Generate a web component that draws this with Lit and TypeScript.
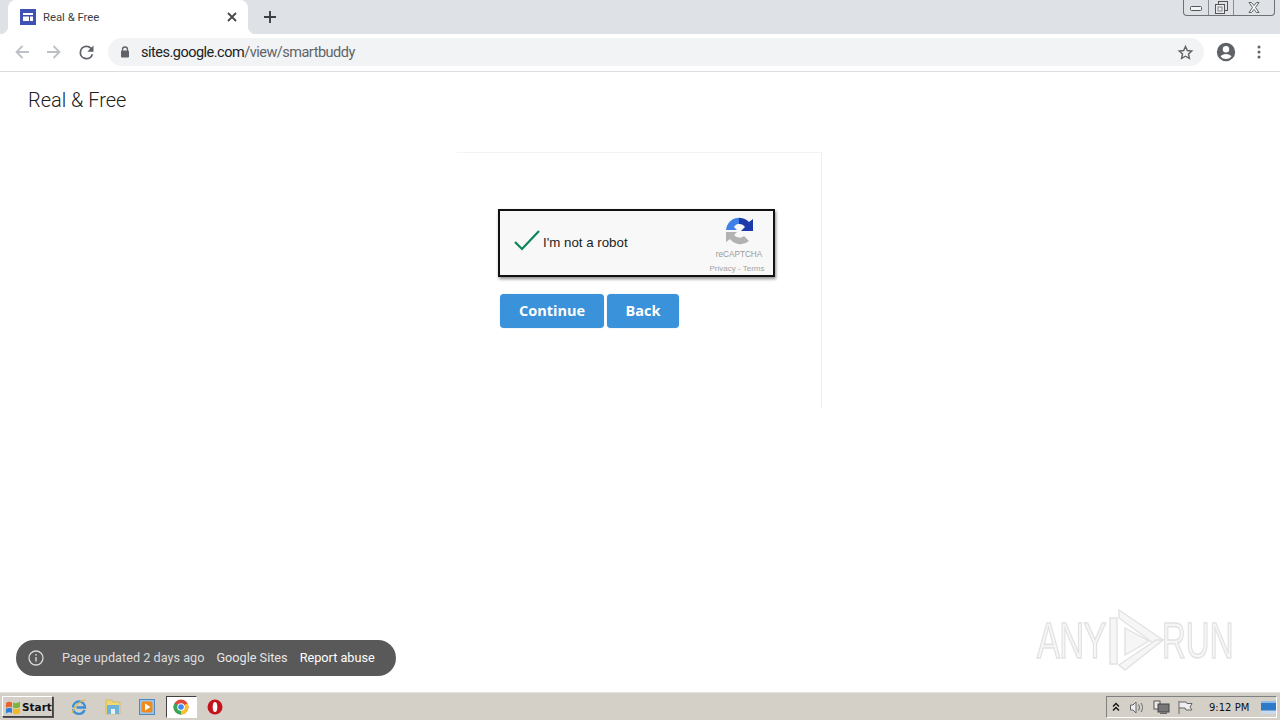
import { LitElement, html, css } from "lit";
import { customElement } from "lit/decorators.js";

@customElement("app-root")
export class AppRoot extends LitElement {
  static styles = css`
    :host { display: flex; flex-direction: column; width: 1280px; height: 720px; overflow: hidden; background: #fff; font-family: Roboto, "Liberation Sans", sans-serif; position: relative; }
    .tabstrip { height: 34px; background: #dee1e6; display: flex; align-items: flex-end; flex: none; position: relative; }
    .tab { width: 240px; height: 34px; margin-left: 8px; background: #fff; border-radius: 8px 8px 0 0; display: flex; align-items: center; padding: 0 8px 0 12px; box-sizing: border-box; gap: 7px; position: relative; }
    .tab::before, .tab::after { content: ""; position: absolute; bottom: 0; width: 8px; height: 8px; background: radial-gradient(circle at var(--c) 0, #dee1e6 8px, #fff 8.5px); }
    .tab::before { left: -8px; --c: 0; }
    .tab::after { right: -8px; --c: 100%; }
    .tab .title { font-size: 11.3px; color: #3c4043; flex: 1; white-space: nowrap; }
    .newtab { margin-left: 15px; height: 34px; display: flex; align-items: center; }
    .winbtns { position: absolute; right: 5px; top: 0; width: 92px; height: 16px; border: 1px solid #6d7074; border-top: none; border-radius: 0 0 4px 4px; display: grid; grid-template-columns: 25px 25px 1fr; box-sizing: border-box; }
    .winbtns div { display: flex; align-items: center; justify-content: center; border-right: 1px solid #8a8d91; }
    .winbtns div:last-child { border-right: none; }
    .toolbar { height: 38px; flex: none; background: #fff; border-bottom: 1px solid #dadce0; box-sizing: border-box; display: flex; align-items: center; padding-bottom: 1px; }
    .nav { width: 32px; height: 32px; display: flex; align-items: center; justify-content: center; flex: none; }
    .navs { display: flex; margin-left: 6px; margin-right: 6px; }
    .omni { width: 1096px; height: 28px; border-radius: 14px; background: #f1f3f4; display: flex; align-items: center; padding: 0 9px 0 11px; box-sizing: border-box; flex: none; }
    .url { margin-left: 10px; font-size: 14.5px; color: #202124; flex: 1; white-space: nowrap; letter-spacing: -0.5px; }
    .url span { color: #5f6368; }
    .tools { display: flex; align-items: center; margin-left: 11px; }
    .avatar { width: 22px; height: 22px; display: flex; margin-right: 20px; }
    .page { flex: 1; position: relative; min-height: 0; }
    .sitetitle { font-size: 20px; font-weight: 300; color: #212121; padding: 17px 0 0 28px; line-height: 23px; letter-spacing: -0.02px; }
    .card { width: 365px; height: 256px; box-sizing: border-box; margin: 40px 0 0 457px; border-top: 1px solid #f3f3f3; border-right: 1px solid #eeeeee; padding: 56px 0 0 41px; }
    .captcha { width: 277px; height: 68px; box-sizing: border-box; border: 2px solid #111; background: #f8f8f8; box-shadow: 1px 2px 3px rgba(0,0,0,.45); display: flex; position: relative; align-items: center; padding: 0 0 4px 13px; }
    .captcha .label { font-family: "Liberation Sans", sans-serif; font-size: 13.3px; color: #1c1c1c; margin: 0 0 -2px 2px; }
    .rc { position: absolute; right: 0; top: 0; bottom: 0; width: 80px; display: flex; flex-direction: column; align-items: center; }
    .rc svg { margin-top: 6px; margin-left: 12px; }
    .rc .brand { font-family: "Liberation Sans", sans-serif; font-size: 8.2px; color: #9a9a9a; margin: 4px 0 0 12px; line-height: 10px; }
    .rc .legal { font-family: "Liberation Sans", sans-serif; font-size: 8px; color: #a4a4a4; margin: 4px 0 0 8px; line-height: 10px; white-space: nowrap; }
    .buttons { display: flex; gap: 3px; margin: 17px 0 0 2px; }
    .btn { height: 34px; background: #3a92db; color: #fff; border-radius: 4px; font-family: "Open Sans", sans-serif; font-weight: 700; font-size: 14.5px; display: flex; align-items: center; justify-content: center; padding-bottom: 1px; box-sizing: border-box; box-shadow: 0 0 1px rgba(58,146,219,.6); }
    .btn.c { width: 104px; }
    .btn.b { width: 72px; }
    .pill { position: absolute; left: 16px; top: 568px; width: 380px; height: 36px; border-radius: 18px; background: #595959; display: flex; align-items: center; padding: 0 0 1px 12px; box-sizing: border-box; color: #e3e3e3; font-size: 12.7px; white-space: nowrap; }
    .pill svg { margin-top: 1px; }
    .pill .t1 { margin-left: 18px; color: #dcdcdc; }
    .pill .t2 { margin-left: 12px; color: #e6e6e6; }
    .pill .t3 { margin-left: 12px; color: #fff; }
    .mark { position: absolute; left: 1037px; top: 536px; height: 64px; width: 200px; font-family: "Liberation Sans", sans-serif; font-size: 50px; line-height: 64px; color: #f6f6f6; -webkit-text-stroke: 1.6px #e2e2e2; filter: blur(.5px); }
    .mark .w { position: absolute; left: 0; top: 1px; transform: scaleX(.69); transform-origin: left center; letter-spacing: -1px; }
    .mark .r { position: absolute; left: 125px; top: 1px; transform: scaleX(.66); transform-origin: left center; }
    .mark svg { position: absolute; left: 70px; top: 0; }
    .taskbar { height: 28px; flex: none; background: #d4d0c8; border-top: 1px solid #e6e3dd; box-sizing: border-box; display: flex; align-items: center; position: relative; }
    .start { width: 51px; height: 21px; margin-left: 2px; box-sizing: border-box; border: 1px solid; border-color: #fff #404040 #404040 #fff; box-shadow: 1px 1px 0 #555; display: flex; align-items: center; padding-left: 2px; gap: 1px; font-family: "DejaVu Sans", sans-serif; font-weight: 700; font-size: 10.5px; color: #111; }
    .ql { display: flex; align-items: center; margin-left: 9px; }
    .ql .i { width: 34px; display: flex; justify-content: center; align-items: center; }
    .ql .act { width: 31px; height: 22px; background: #fff; border: 1px solid; border-color: #404040 #fff #fff #404040; box-sizing: border-box; display: flex; align-items: center; justify-content: center; }
    .tray { position: absolute; right: 3px; top: 3px; width: 171px; height: 22px; border: 1px solid; border-color: #808080 #fff #fff #808080; box-sizing: border-box; display: flex; align-items: center; font-size: 11.5px; color: #111; }
    .tray .first { display: flex; width: 18px; justify-content: center; }
    .tray .clock { margin-left: 12px; width: 40px; white-space: nowrap; font-family: "DejaVu Sans", sans-serif; font-size: 10px; }
    .tray .ti { display: flex; width: 24px; justify-content: center; }
    .tray .desk { margin-left: 12px; flex: none; }
  `;

  render() {
    return html`
      <div class="tabstrip">
        <div class="tab">
          <svg width="16" height="16" viewBox="0 0 16 16"><rect width="16" height="16" fill="#3f51b5"/><rect x="3" y="4" width="10" height="2" fill="#fff"/><rect x="3" y="7.5" width="6" height="4.500" fill="#fff"/><rect x="10" y="7.5" width="3" height="4.500" fill="#fff"/></svg>
          <span class="title">Real &amp; Free</span>
          <svg width="16" height="16" viewBox="0 0 16 16"><path d="M4 4l8 8M12 4l-8 8" stroke="#45484c" stroke-width="1.800" fill="none"/></svg>
        </div>
        <div class="newtab"><svg width="14" height="14" viewBox="0 0 14 14"><path d="M7 1v12M1 7h12" stroke="#3c4043" stroke-width="1.900" fill="none"/></svg></div>
        <div class="winbtns">
          <div><svg width="12" height="8" viewBox="0 0 12 8"><rect x=".5" y="2.500" width="11" height="4" rx="1" fill="#f4f5f7" stroke="#555"/></svg></div>
          <div><svg width="13" height="13" viewBox="0 0 13 13"><rect x="3.500" y=".5" width="9" height="9" fill="none" stroke="#555"/><rect x=".5" y="3.500" width="9" height="9" fill="#e8eaee" stroke="#555"/><rect x="3" y="6" width="4" height="4" fill="none" stroke="#888"/></svg></div>
          <div><svg width="12" height="11" viewBox="0 0 12 11"><path d="M1 .5h2.500L6 3.500 8.500.5H11L7.500 5.500 11 10.500H8.500L6 7.500 3.500 10.500H1L4.500 5.500z" fill="#f4f5f7" stroke="#555" stroke-width=".9"/></svg></div>
        </div>
      </div>
      <div class="toolbar">
        <div class="navs">
          <div class="nav"><svg width="16" height="16" viewBox="0 0 16 16"><path d="M15 8H2.500M8.500 2L2.500 8l6 6" stroke="#bdc1c6" stroke-width="1.800" fill="none"/></svg></div>
          <div class="nav"><svg width="16" height="16" viewBox="0 0 16 16"><path d="M1 8h12.500M7.500 2l6 6-6 6" stroke="#bdc1c6" stroke-width="1.800" fill="none"/></svg></div>
          <div class="nav"><svg width="21" height="21" viewBox="0 0 24 24"><path d="M17.650 6.350A7.960 7.960 0 0 0 12 4a8 8 0 1 0 7.730 10h-2.080A6 6 0 1 1 12 6c1.660 0 3.140.69 4.220 1.780L13 11h7V4z" fill="#5f6368"/></svg></div>
        </div>
        <div class="omni">
          <svg width="12" height="14" viewBox="0 0 12 14"><path d="M3.500 6V4.500a2.500 2.500 0 0 1 5 0V6" fill="none" stroke="#5f6368" stroke-width="1.300"/><rect x="2" y="5.500" width="8" height="7" rx="1" fill="#5f6368"/></svg>
          <span class="url">sites.google.com<span>/view/smartbuddy</span></span>
          <svg width="17" height="17" viewBox="0 0 24 24" style="margin-right:1px"><path d="M12 3.500l2.600 5.700 6.200.7-4.600 4.200 1.300 6.100L12 17.200l-5.500 3 1.300-6.100-4.600-4.200 6.200-.7z" fill="none" stroke="#5f6368" stroke-width="2"/></svg>
        </div>
        <div class="tools">
          <div class="avatar"><svg width="22" height="22" viewBox="0 0 24 24"><path d="M12 2a10 10 0 1 0 0 20 10 10 0 0 0 0-20zm0 3.500a3.500 3.500 0 1 1 0 7 3.500 3.500 0 0 1 0-7zm0 14.200a7.700 7.700 0 0 1-6-2.900c.8-1.700 3.800-2.700 6-2.700s5.200 1 6 2.700a7.700 7.700 0 0 1-6 2.900z" fill="#5f6368"/></svg></div>
          <svg width="4" height="14" viewBox="0 0 4 14"><circle cx="2" cy="2" r="1.500" fill="#5f6368"/><circle cx="2" cy="7" r="1.500" fill="#5f6368"/><circle cx="2" cy="12" r="1.500" fill="#5f6368"/></svg>
        </div>
      </div>
      <div class="page">
        <div class="sitetitle">Real &amp; Free</div>
        <div class="card">
          <div class="captcha">
            <svg width="28" height="24" viewBox="0 0 28 24"><path d="M2 13l7 7L26 2" fill="none" stroke="#0b8457" stroke-width="2.200"/></svg>
            <span class="label">I'm not a robot</span>
            <div class="rc">
              <svg width="29" height="29" viewBox="0 0 29 29">
                <path d="M1 14a13 13 0 0 1 15-13v6a7 7 0 0 0-7 3l3 3H1z" fill="#3f7fe8"/>
                <path d="M14 1a13 13 0 0 1 10 4l4-3v12H16l4-4a7 7 0 0 0-6-3z" fill="#1c3aa9"/>
                <path d="M1 15h11l-3 3a7 7 0 0 0 10 1l5 5a13 13 0 0 1-19-2l-4 3z" fill="#b2b2b2"/>
              </svg>
              <div class="brand">reCAPTCHA</div>
              <div class="legal">Privacy - Terms</div>
            </div>
          </div>
          <div class="buttons">
            <div class="btn c">Continue</div>
            <div class="btn b">Back</div>
          </div>
        </div>
        <div class="pill">
          <svg width="16" height="16" viewBox="0 0 16 16"><circle cx="8" cy="8" r="7" fill="none" stroke="#d8d8d8" stroke-width="1.300"/><path d="M8 7v4.500" stroke="#d8d8d8" stroke-width="1.400"/><circle cx="8" cy="4.800" r=".9" fill="#d8d8d8"/></svg>
          <span class="t1">Page updated 2 days ago</span>
          <span class="t2">Google Sites</span>
          <span class="t3">Report abuse</span>
        </div>
        <div class="mark">
          <span class="w">ANY</span>
          <svg width="60" height="64" viewBox="0 0 60 64"><g fill="#f6f6f6" stroke="#e2e2e2" stroke-width="1.400"><path d="M3 10h7v46H3z"/><path d="M12 2l44 30-7 5L12 10z"/><path d="M56 32L18 62l-6-5 37-25z"/><path d="M18 20l24 13-24 14z"/></g></svg>
          <span class="r">RUN</span>
        </div>
      </div>
      <div class="taskbar">
        <div class="start">
          <svg width="16" height="16" viewBox="0 0 16 16"><path d="M1 4c2-1.500 4-1.500 6-.5v5C5 7.500 3 7.500 1 9z" fill="#e8642c"/><path d="M8 3.500c2 1 4 1 7-1v5.500c-3 1.500-5 1.500-7 .5z" fill="#7cb53c"/><path d="M1 10c2-1.500 4-1.500 6-.5V14c-2-1-4-1-6 .5z" fill="#2f7fd6"/><path d="M8 9.500c2 1 4 1 7-.5v5c-3 1.500-5 1.500-7 .5z" fill="#f2b824"/></svg>
          Start
        </div>
        <div class="ql">
          <div class="i"><svg width="18" height="18" viewBox="0 0 18 18"><path d="M3 9.500a6 6 0 0 1 12 0H6.500M14.500 12a6 6 0 0 1-11.500-1" fill="none" stroke="#3a90d8" stroke-width="2.300"/><path d="M2 15C4 8 11 2 16 2" fill="none" stroke="#e8b93a" stroke-width="1.200"/></svg></div>
          <div class="i"><svg width="16" height="16" viewBox="0 0 16 16"><path d="M1 1h6l1 2h7v12H1z" fill="#f0d870" stroke="#c9ad50" stroke-width=".6"/><rect x="2" y="6" width="12" height="9" fill="#6fb2da"/><rect x="6" y="10" width="4" height="5" fill="#e4f2f8"/></svg></div>
          <div class="i"><svg width="16" height="16" viewBox="0 0 16 16"><rect x=".5" y=".5" width="15" height="15" fill="#9cc4e8" stroke="#4d88bf"/><rect x="2.500" y="2.500" width="11" height="11" rx="2" fill="#f08a1c"/><path d="M6 4.500v7l5.500-3.500z" fill="#fff"/></svg></div>
          <div class="i"><div class="act"><svg width="16" height="16" viewBox="0 0 16 16"><circle cx="8" cy="8" r="7.500" fill="#e0483a"/><path d="M8 8L14.500 4.300A7.500 7.500 0 0 1 8 15.500z" fill="#f4c430"/><path d="M8 8v7.500A7.500 7.500 0 0 1 1.500 4.300z" fill="#3aa757"/><circle cx="8" cy="8" r="3.800" fill="#fff"/><circle cx="8" cy="8" r="2.800" fill="#4285f4"/></svg></div></div>
          <div class="i"><svg width="16" height="16" viewBox="0 0 16 16"><circle cx="8" cy="8" r="7.500" fill="#c4141a"/><ellipse cx="8" cy="8" rx="2.300" ry="5" fill="#fff"/></svg></div>
        </div>
        <div class="tray">
          <div class="first"><svg width="8" height="10" viewBox="0 0 8 10"><path d="M1 4.500l3-3 3 3M1 8.500l3-3 3 3" fill="none" stroke="#111" stroke-width="1.300"/></svg></div>
          <div class="ti"><svg width="17" height="15" viewBox="0 0 17 15"><path d="M1.500 5h2.500l3-3v11l-3-3H1.500z" fill="#eee" stroke="#666"/><path d="M9.500 4.500c1.200 2 1.200 4 0 6M12 3c2 3 2 6 0 9" fill="none" stroke="#666"/></svg></div>
          <div class="ti"><svg width="17" height="15" viewBox="0 0 17 15"><rect x="1" y="1" width="6" height="8" fill="#eee" stroke="#555"/><rect x="5" y="4" width="11" height="8" fill="#777" stroke="#444"/><rect x="7" y="12.500" width="7" height="1.500" fill="#666"/></svg></div>
          <div class="ti"><svg width="16" height="15" viewBox="0 0 16 15"><path d="M2 1v13M2 2h7l1 1.500h5L13 7l2 3H9L8 8H2" fill="#eee" stroke="#666"/></svg></div>
          <span class="clock">9:12 PM</span>
          <svg class="desk" width="15" height="13" viewBox="0 0 15 13"><rect width="15" height="13" fill="#2f79c9"/><rect y="9.500" width="15" height="3.500" fill="#c9d8ea"/><rect width="15" height="2" fill="#8fbbe8"/></svg>
        </div>
      </div>
    `;
  }
}
